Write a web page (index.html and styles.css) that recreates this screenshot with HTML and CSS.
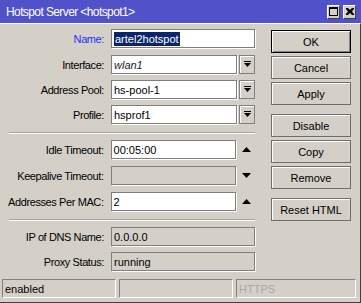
FILE: index.html
```html
<!DOCTYPE html>
<html>
<head>
  <title>Hotspot Server</title>
  <link rel="stylesheet" href="styles.css">
</head>
<body>

  <div class="window">
    <div class="titlebar">
      <span class="title">Hotspot Server &lt;hotspot1&gt;</span>
      <div class="title-buttons">
        <span class="tbtn">
          <svg width="9" height="9" viewBox="0 0 9 9"><rect x="0.5" y="0.5" width="8" height="8" fill="none" stroke="#000"/><rect x="0" y="0" width="9" height="2" fill="#000"/></svg>
        </span>
        <span class="tbtn">
          <svg width="8" height="7" viewBox="0 0 8 7"><path d="M0 0h2l2 2 2-2h2v1l-2 2.5 2 2.5v1h-2l-2-2-2 2h-2v-1l2-2.5-2-2.5z" fill="#000"/></svg>
        </span>
      </div>
    </div>

    <div class="content">
      <div class="main">
        <div class="form">
          <div class="group top">
            <div class="row name-row">
              <span class="label name">Name:</span>
              <div class="field"><span class="selected">artel2hotspot</span></div>
            </div>
            <div class="row">
              <span class="label">Interface:</span>
              <div class="field short"><i>wlan1</i></div>
              <span class="drop"><svg width="7" height="7" viewBox="0 0 7 7"><rect x="0" y="0" width="7" height="1" fill="#000"/><path d="M0 2h7l-3.5 4z" fill="#000"/></svg></span>
            </div>
            <div class="row">
              <span class="label">Address Pool:</span>
              <div class="field short">hs-pool-1</div>
              <span class="drop"><svg width="7" height="7" viewBox="0 0 7 7"><rect x="0" y="0" width="7" height="1" fill="#000"/><path d="M0 2h7l-3.5 4z" fill="#000"/></svg></span>
            </div>
            <div class="row">
              <span class="label">Profile:</span>
              <div class="field short">hsprof1</div>
              <span class="drop"><svg width="7" height="7" viewBox="0 0 7 7"><rect x="0" y="0" width="7" height="1" fill="#000"/><path d="M0 2h7l-3.5 4z" fill="#000"/></svg></span>
            </div>
          </div>

          <div class="sep"></div>

          <div class="group timeouts">
            <div class="row">
              <span class="label">Idle Timeout:</span>
              <div class="field short">00:05:00</div>
              <span class="spin"><svg width="9" height="5" viewBox="0 0 9 5"><path d="M0 5h9l-4.5-5z" fill="#000"/></svg></span>
            </div>
            <div class="row">
              <span class="label">Keepalive Timeout:</span>
              <div class="field short disabled"></div>
              <span class="spin"><svg width="9" height="5" viewBox="0 0 9 5"><path d="M0 0h9l-4.5 5z" fill="#000"/></svg></span>
            </div>
            <div class="row">
              <span class="label">Addresses Per MAC:</span>
              <div class="field short">2</div>
              <span class="spin"><svg width="9" height="5" viewBox="0 0 9 5"><path d="M0 5h9l-4.5-5z" fill="#000"/></svg></span>
            </div>
          </div>

          <div class="sep"></div>

          <div class="group">
            <div class="row">
              <span class="label">IP of DNS Name:</span>
              <div class="field disabled">0.0.0.0</div>
            </div>
            <div class="row">
              <span class="label">Proxy Status:</span>
              <div class="field disabled">running</div>
            </div>
          </div>
        </div>

        <div class="buttons">
          <div class="btn-group">
            <button class="btn default">OK</button>
            <button class="btn">Cancel</button>
            <button class="btn">Apply</button>
          </div>
          <div class="btn-group">
            <button class="btn">Disable</button>
            <button class="btn">Copy</button>
            <button class="btn">Remove</button>
          </div>
          <div class="btn-group">
            <button class="btn">Reset HTML</button>
          </div>
        </div>
      </div>

      <div class="statusbar">
        <div class="panel">enabled</div>
        <div class="panel"></div>
        <div class="panel dim">HTTPS</div>
      </div>
    </div>
  </div>

</body>
</html>
```

FILE: styles.css
```css
html,
body {
  margin: 0;
  padding: 0;
  background-color: #d4d0c8;
}

body {
  font-family: 'Liberation Sans', Arial, sans-serif;
  font-size: 11px;
  color: black;
}

.window {
  width: 361px;
  height: 303px;
  display: flex;
  flex-direction: column;
  background-color: #d4d0c8;
}

/* Title bar */
.titlebar {
  height: 23px;
  flex-shrink: 0;
  background-color: #5151c9;
  display: flex;
  align-items: center;
  justify-content: space-between;
  padding: 0 6px;
  box-sizing: border-box;
}

.title {
  color: white;
  font-size: 12px;
  letter-spacing: -0.6px;
  padding-top: 1px;
}

.title-buttons {
  display: flex;
  gap: 3px;
  margin-right: -1px;
}

.tbtn {
  width: 13px;
  height: 14px;
  box-sizing: border-box;
  background-color: #d4d0c8;
  border: 1px solid;
  border-color: #fff #404040 #404040 #fff;
  display: flex;
  align-items: center;
  justify-content: center;
}

/* Content */
.content {
  flex: 1;
  display: flex;
  flex-direction: column;
  border-right: 1px solid #404040;
  border-bottom: 1px solid #404040;
  border-top: 1px solid #fff;
}

.main {
  display: flex;
  gap: 16px;
  padding-top: 5px;
}

.form {
  width: 255px;
  display: flex;
  flex-direction: column;
}

.group {
  display: flex;
  flex-direction: column;
  gap: 6px;
}

.group.timeouts {
  gap: 7px;
}

.name-row {
  margin-bottom: 1px;
}

.row {
  display: flex;
  align-items: center;
  height: 19px;
}

.label {
  width: 104px;
  margin-right: 7px;
  text-align: right;
  letter-spacing: -0.4px;
  white-space: nowrap;
}

.label.name {
  color: #2b2bff;
}

.field {
  width: 144px;
  height: 19px;
  box-sizing: border-box;
  background-color: white;
  border: 1px solid #7f7f7f;
  box-shadow: 1px 1px 0 #fff;
  padding: 0 2px;
  display: flex;
  align-items: center;
  white-space: nowrap;
  overflow: hidden;
}

.field.short {
  width: 126px;
}

.field.disabled {
  background-color: #d4d0c8;
}

.field i {
  color: #222;
}

.selected {
  background-color: #0a246a;
  color: white;
  padding: 1px 1px;
}

.drop {
  width: 16px;
  height: 19px;
  margin-left: 2px;
  box-sizing: border-box;
  border: 1px solid #808080;
  box-shadow: inset 1px 1px 0 #fff;
  background-color: #d4d0c8;
  display: flex;
  align-items: center;
  justify-content: center;
}

.spin {
  width: 18px;
  margin-left: 1px;
  display: flex;
  justify-content: center;
}

.sep {
  margin: 8px 0 6px 9px;
  width: 246px;
  border-top: 1px solid #a8a5a0;
  border-bottom: 1px solid #fff;
}

.group.timeouts + .sep {
  margin-top: 8px;
}

/* Buttons */
.buttons {
  display: flex;
  flex-direction: column;
  gap: 9px;
  padding-top: 1px;
}

.btn-group {
  display: flex;
  flex-direction: column;
  gap: 3px;
}

.btn {
  width: 80px;
  height: 23px;
  margin: 0;
  padding: 0;
  background-color: #d4d0c8;
  border: 1px solid #6e6e6e;
  box-shadow: inset 1px 1px 0 #fff;
  font-family: 'Liberation Sans', Arial, sans-serif;
  font-size: 11px;
  color: black;
}

.btn.default {
  border-color: #000;
  box-shadow: inset 1px 1px 0 #fff, inset -1px -1px 0 #808080;
}

/* Status bar */
.statusbar {
  margin-top: auto;
  margin-bottom: 4px;
  display: flex;
  gap: 3px;
  padding-left: 2px;
}

.panel {
  width: 114px;
  height: 19px;
  box-sizing: border-box;
  border: 1px solid;
  border-color: #808080 #fff #fff #808080;
  padding-left: 2px;
  display: flex;
  align-items: center;
}

.panel:last-child {
  width: 120px;
}

.panel.dim {
  color: #a8a8a8;
}
```
